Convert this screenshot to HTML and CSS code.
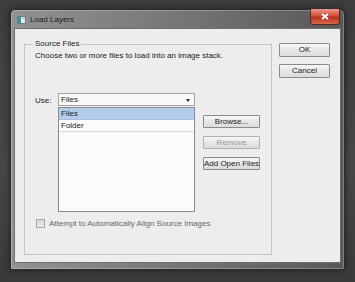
FILE: index.html
```html
<!DOCTYPE html>
<html>
<head>
<meta charset="utf-8">
<link rel="stylesheet" href="styles.css">
</head>
<body>
<div class="window">
  <div class="titlebar">
    <svg class="app-icon" width="9" height="8" viewBox="0 0 9 8">
      <rect x="0.5" y="0.5" width="8" height="7" fill="#e8eef0" stroke="#6d7f86"/>
      <rect x="1" y="1" width="3" height="6" fill="#3f8f9a"/>
      <rect x="5" y="2" width="3" height="1" fill="#9fb8c0"/>
    </svg>
    <span class="title">Load Layers</span>
    <div class="close">
      <svg width="8" height="7" viewBox="0 0 8 7"><path d="M1 1 L7 6 M7 1 L1 6" stroke="#fff" stroke-width="1.8"/></svg>
    </div>
  </div>
  <div class="client">
    <div class="group">
      <span class="legend">Source Files</span>
      <p class="desc">Choose two or more files to load into an image stack.</p>
      <div class="use-row">
        <span class="use-label">Use:</span>
        <div class="combo">
          <div class="dropdown"><span>Files</span><span class="arrow"></span></div>
          <div class="list">
            <div class="item selected">Files</div>
            <div class="item">Folder</div>
          </div>
        </div>
        <div class="side">
          <div class="btn">Browse...</div>
          <div class="btn disabled">Remove</div>
          <div class="btn">Add Open Files</div>
        </div>
      </div>
      <div class="check-row">
        <span class="checkbox"></span>
        <span class="check-label">Attempt to Automatically Align Source Images</span>
      </div>
    </div>
    <div class="actions">
      <div class="btn big">OK</div>
      <div class="btn big">Cancel</div>
    </div>
  </div>
</div>
</body>
</html>
```
FILE: styles.css
```css
* { box-sizing: border-box; }
html, body { margin: 0; height: 100%; }
body {
  width: 355px;
  height: 282px;
  overflow: hidden;
  padding: 9px 0 0 10px;
  background: linear-gradient(to bottom, #3d3d3d, #474747 60%, #3a3a3a);
  font-family: "Liberation Sans", Arial, sans-serif;
  font-size: 8px;
  color: #222;
}
.window {
  width: 335px;
  height: 261px;
  border: 1px solid #2b2b2b;
  border-radius: 5px 5px 2px 2px;
  background: linear-gradient(to right, #929292, #7c7c7c 40%, #676767 75%, #585858);
  box-shadow: inset 0 0 0 1px rgba(255,255,255,0.25), 0 0 6px rgba(0,0,0,0.5);
  padding: 0 3px;
  display: flex;
  flex-direction: column;
}
.titlebar {
  height: 18px;
  display: flex;
  align-items: center;
  padding-left: 3px;
}
.app-icon { margin-top: 1px; }
.title {
  margin-left: 4px;
  margin-top: 1px;
  color: #1a1a1a;
  font-size: 8px;
}
.close {
  margin-left: auto;
  margin-right: 1px;
  align-self: flex-start;
  margin-top: -1px;
  width: 30px;
  height: 16px;
  border: 1px solid #5a2a22;
  border-top: none;
  border-radius: 0 0 4px 4px;
  background: linear-gradient(to bottom, #e79a8a, #d2503a 45%, #b8311e 55%, #d66a4c);
  display: flex;
  align-items: center;
  justify-content: center;
}
.client {
  width: 327px;
  height: 235px;
  background: #ededed;
  border: 1px solid #6e6e6e;
  display: flex;
  padding: 15px 0 0 9px;
}
.group {
  position: relative;
  width: 248px;
  height: 211px;
  border: 1px solid #c6c6c6;
  padding: 6px 0 0 10px;
}
.legend {
  position: absolute;
  top: -6px;
  left: 8px;
  padding: 0 2px;
  background: #ededed;
  line-height: 10px;
}
.desc {
  margin: 0;
  line-height: 10px;
}
.use-row {
  display: flex;
  margin-top: 32px;
}
.use-label {
  width: 23px;
  line-height: 13px;
  padding-top: 1px;
}
.combo {
  width: 137px;
  display: flex;
  flex-direction: column;
}
.dropdown {
  height: 13px;
  border: 1px solid #a3a3a3;
  background: #fafafa;
  display: flex;
  align-items: center;
  justify-content: space-between;
  padding: 0 4px 0 2px;
}
.arrow {
  width: 0;
  height: 0;
  border-left: 2.5px solid transparent;
  border-right: 2.5px solid transparent;
  border-top: 3px solid #222;
  margin-top: 1px;
}
.list {
  margin-top: 1px;
  height: 105px;
  border: 1px solid #8a8a8a;
  background: #fbfbfb;
}
.item {
  height: 12px;
  line-height: 11px;
  padding-left: 2px;
}
.item.selected {
  background: #b3cdee;
  border-bottom: 1px solid #a9bfd9;
}
.item + .item { border-bottom: 1px solid #d8d8d8; }
.side {
  margin-left: 8px;
  padding-top: 22px;
  display: flex;
  flex-direction: column;
  gap: 8px;
}
.btn {
  width: 57px;
  height: 13px;
  border: 1px solid #8a8a8a;
  border-radius: 1px;
  background: linear-gradient(to bottom, #f7f7f7, #e6e6e6 50%, #dcdcdc);
  display: flex;
  align-items: center;
  justify-content: center;
  line-height: 10px;
  color: #1e1e1e;
  white-space: nowrap;
}
.btn.disabled { color: #9a9a9a; border-color: #b0b0b0; }
.check-row {
  display: flex;
  align-items: center;
  margin-top: 7px;
  padding-left: 1px;
}
.checkbox {
  width: 9px;
  height: 9px;
  border: 1px solid #a8a8a8;
  background: linear-gradient(to bottom, #d8d8d8, #e8e8e8);
}
.check-label {
  margin-left: 4px;
  color: #666;
}
.actions {
  margin-left: 7px;
  display: flex;
  flex-direction: column;
  gap: 7px;
  margin-top: -1px;
}
.btn.big {
  width: 51px;
  height: 14px;
}
```
